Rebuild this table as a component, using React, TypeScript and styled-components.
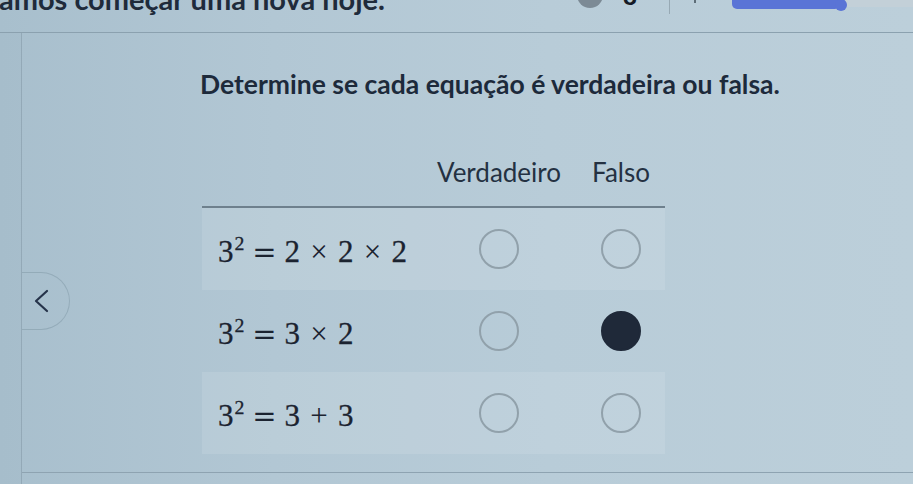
import React from "react";
import styled, { createGlobalStyle } from "styled-components";

const Global = createGlobalStyle`
  html, body { margin: 0; padding: 0; }
  body {
    width: 913px;
    height: 484px;
    overflow: hidden;
    background: linear-gradient(90deg, #a8bfcd 0%, #b2c7d4 30%, #b8ccd8 60%, #bccfda 100%);
    font-family: Lato, "Noto Sans", sans-serif;
    color: #1d2a3b;
  }
`;

const Page = styled.div`
  display: flex;
  flex-direction: column;
  height: 484px;
  overflow: hidden;
`;

const TopBar = styled.header`
  display: flex;
  align-items: flex-start;
  height: 33px;
  box-sizing: border-box;
  border-bottom: 1px solid #8ba1af;
  overflow: hidden;
  flex-shrink: 0;
`;

const Greeting = styled.div`
  margin-top: -14px;
  margin-left: -19px;
  font-size: 29px;
  line-height: 26px;
  font-weight: 700;
  white-space: nowrap;
  color: #1f2b3b;
`;

const StatusGroup = styled.div`
  display: flex;
  align-items: flex-start;
  margin-left: auto;
`;

const Avatar = styled.div`
  width: 26px;
  height: 26px;
  margin-top: -18px;
  border-radius: 50%;
  background: #7c8a95;
`;

const Count = styled.div`
  margin-top: -16px;
  margin-left: 20px;
  font-size: 24px;
  line-height: 24px;
  font-weight: 900;
  color: #151b26;
`;

const Divider = styled.div`
  width: 1px;
  height: 14px;
  margin-left: 32px;
  background: #97a9b4;
`;

const Tick = styled.div`
  width: 2px;
  height: 3px;
  margin-left: 24px;
  background: #5d6d78;
`;

const Progress = styled.div`
  position: relative;
  display: flex;
  margin-left: 36px;
  width: 181px;
  height: 8px;
`;

const ProgressFill = styled.div`
  width: 108px;
  height: 9px;
  border-radius: 0 0 5px 5px;
  background: #5a74d6;
`;

const ProgressRest = styled.div`
  flex: 1;
  height: 7px;
  background: #c3d0d8;
`;

const Knob = styled.div`
  position: absolute;
  left: 103px;
  top: -1px;
  width: 12px;
  height: 12px;
  border-radius: 50%;
  background: #5a74d6;
`;

const Body = styled.div`
  display: flex;
  flex: 1;
  min-height: 0;
`;

const Rail = styled.div`
  width: 21px;
  flex-shrink: 0;
  border-right: 1px solid #93a9b7;
  background: rgba(120, 150, 170, 0.04);
`;

const Main = styled.main`
  position: relative;
  flex: 1;
  display: flex;
  flex-direction: column;
`;

const Content = styled.section`
  flex: 1;
  padding: 35px 0 0 178px;
`;

const Footer = styled.div`
  height: 11px;
  border-top: 1px solid #8ea3b1;
  flex-shrink: 0;
`;

const NavTab = styled.button`
  position: absolute;
  left: 0;
  top: 239px;
  width: 48px;
  height: 58px;
  padding: 0 0 0 11px;
  display: flex;
  align-items: center;
  background: transparent;
  border: 1px solid rgba(70, 95, 112, 0.22);
  border-left: none;
  border-radius: 0 29px 29px 0;
  cursor: pointer;
`;

const Title = styled.h1`
  margin: 0;
  font-size: 26.5px;
  line-height: 32px;
  font-weight: 700;
  color: #1d2a3b;
  white-space: nowrap;
`;

const Table = styled.div`
  width: 463px;
  margin-left: 2px;
  display: grid;
  grid-template-columns: 242px 110px 111px;
`;

const HeadCell = styled.div<{ $inset?: boolean }>`
  height: 108px;
  box-sizing: border-box;
  display: flex;
  align-items: flex-end;
  justify-content: center;
  padding: 0 0 19px ${(p) => (p.$inset ? "23px" : "0")};
  border-bottom: 2px solid #6e808d;
  font-size: 26px;
  line-height: 30px;
  color: #243142;
  white-space: nowrap;
`;

const Cell = styled.div<{ $striped?: boolean; $inset?: boolean; $left?: boolean }>`
  height: 82px;
  box-sizing: border-box;
  display: flex;
  align-items: center;
  justify-content: ${(p) => (p.$left ? "flex-start" : "center")};
  padding-left: ${(p) => (p.$left ? "16px" : p.$inset ? "23px" : "0")};
  background: ${(p) => (p.$striped ? "rgba(255, 255, 255, 0.11)" : "transparent")};
`;

const Formula = styled.span`
  display: inline-flex;
  align-items: baseline;
  font-family: "Liberation Serif", "DejaVu Serif", serif;
  font-size: 31px;
  font-weight: 400;
  line-height: 1;
  padding-top: 5px;
  color: #1b2330;
  white-space: nowrap;
  -webkit-text-stroke: 0.3px #1b2330;
`;

const Sup = styled.span`
  font-size: 0.64em;
  position: relative;
  top: -0.62em;
  margin-left: 1px;
`;

const Op = styled.span<{ $rel?: boolean }>`
  display: inline-block;
  width: ${(p) => (p.$rel ? "40px" : "38px")};
  text-align: center;
  font-family: ${(p) => (p.$rel ? '"DejaVu Serif", serif' : '"Liberation Serif", serif')};
  font-size: ${(p) => (p.$rel ? "29px" : "31px")};
  -webkit-text-stroke: 0;
`;

const Radio = styled.span<{ $checked?: boolean }>`
  width: 40px;
  height: 40px;
  box-sizing: border-box;
  border-radius: 50%;
  border: 2px solid ${(p) => (p.$checked ? "#1f2939" : "#91a1ab")};
  background: ${(p) => (p.$checked ? "#1f2939" : "transparent")};
`;

type Row = { parts: (string | { op: string })[]; answer: "v" | "f" | null };

const rows: Row[] = [
  { parts: ["2", { op: "×" }, "2", { op: "×" }, "2"], answer: null },
  { parts: ["3", { op: "×" }, "2"], answer: "f" },
  { parts: ["3", { op: "+" }, "3"], answer: null },
];

function Equation({ parts }: { parts: Row["parts"] }) {
  return (
    <Formula>
      3<Sup>2</Sup>
      <Op $rel>=</Op>
      {parts.map((p, i) =>
        typeof p === "string" ? <span key={i}>{p}</span> : <Op key={i}>{p.op}</Op>
      )}
    </Formula>
  );
}

export default function App() {
  return (
    <>
      <Global />
      <Page>
        <TopBar>
          <Greeting>Vamos começar uma nova hoje.</Greeting>
          <StatusGroup>
            <Avatar />
            <Count>8</Count>
            <Divider />
            <Tick />
            <Progress>
              <ProgressFill />
              <ProgressRest />
              <Knob />
            </Progress>
          </StatusGroup>
        </TopBar>
        <Body>
          <Rail />
          <Main>
            <Content>
              <Title>Determine se cada equação é verdadeira ou falsa.</Title>
              <Table>
                <HeadCell />
                <HeadCell>Verdadeiro</HeadCell>
                <HeadCell $inset>Falso</HeadCell>
                {rows.map((r, i) => {
                  const striped = i % 2 === 0;
                  return (
                    <React.Fragment key={i}>
                      <Cell $striped={striped} $left>
                        <Equation parts={r.parts} />
                      </Cell>
                      <Cell $striped={striped}>
                        <Radio $checked={r.answer === "v"} />
                      </Cell>
                      <Cell $striped={striped} $inset>
                        <Radio $checked={r.answer === "f"} />
                      </Cell>
                    </React.Fragment>
                  );
                })}
              </Table>
            </Content>
            <Footer />
            <NavTab aria-label="Anterior">
              <svg width="16" height="24" viewBox="0 0 16 24" fill="none">
                <path d="M14 2 L3 12 L14 22" stroke="#26334a" strokeWidth="2.2" strokeLinecap="round" strokeLinejoin="round" />
              </svg>
            </NavTab>
          </Main>
        </Body>
      </Page>
    </>
  );
}
